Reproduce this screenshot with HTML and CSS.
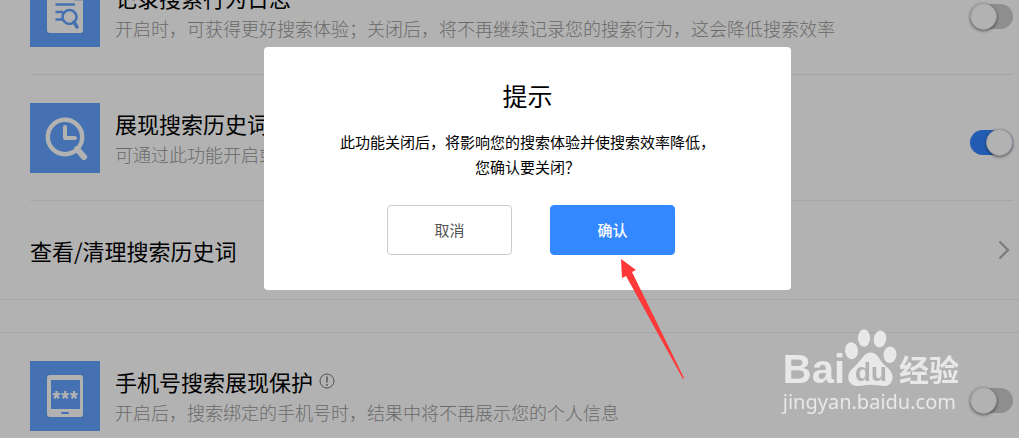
FILE: index.html
```html
<!DOCTYPE html>
<html lang="zh-CN">
<head>
<meta charset="utf-8">
<meta name="viewport" content="width=device-width, initial-scale=1">
<title>搜索设置</title>
<link rel="stylesheet" href="styles.css">
</head>
<body>
<main class="settings">
  <section class="group">
    <div class="row">
      <svg class="row-icon" viewBox="0 0 70 70" aria-hidden="true">
        <rect x="17" y="13" width="36" height="43" rx="3" fill="#fff"/>
        <path d="M43 13 53 24H46q-3 0-3-3z" fill="#c4dcff"/>
        <path d="M25.500 27.500H45M25.500 35H33M25.500 42.500H33" fill="none" stroke="#64a3ff" stroke-width="2.500"/>
        <circle cx="39.500" cy="40" r="7" fill="none" stroke="#64a3ff" stroke-width="2.600"/>
        <path d="M44 45l3 5" stroke="#64a3ff" stroke-width="3.500" stroke-linecap="round"/>
      </svg>
      <div class="row-text">
        <h2 class="row-title"><label for="log">记录搜索行为日志</label></h2>
        <p class="row-desc">开启时，可获得更好搜索体验；关闭后，将不再继续记录您的搜索行为，这会降低搜索效率</p>
      </div>
      <input class="switch" type="checkbox" id="log">
    </div>
    <div class="row">
      <svg class="row-icon" viewBox="0 0 70 70" aria-hidden="true">
        <path d="M47 46l7 8" stroke="#fff" stroke-width="6" stroke-linecap="round"/>
        <circle cx="35" cy="34" r="17.200" fill="none" stroke="#fff" stroke-width="4.400"/>
        <path d="M35 24v11h10" fill="none" stroke="#fff" stroke-width="4" stroke-linecap="round" stroke-linejoin="round"/>
      </svg>
      <div class="row-text">
        <h2 class="row-title"><label for="history">展现搜索历史词</label></h2>
        <p class="row-desc">可通过此功能开启或</p>
      </div>
      <input class="switch" type="checkbox" id="history" checked>
    </div>
    <a class="row-link" href="#">
      <span class="row-title">查看/清理搜索历史词</span>
      <svg class="chevron" viewBox="0 0 12 20" aria-hidden="true"><path d="M1.500 1.500 10 10 1.500 18.500" fill="none" stroke="#b4b4b4" stroke-width="2.400"/></svg>
    </a>
  </section>
  <section class="group">
    <div class="row">
      <svg class="row-icon" viewBox="0 0 70 70" aria-hidden="true">
        <path fill-rule="evenodd" d="M20 14h30q3 0 3 3v36q0 3-3 3H20q-3 0-3-3V17q0-3 3-3zM21 19v29h29V19z" fill="#fff"/>
        <rect x="31" y="51" width="8" height="2" rx="1" fill="#64a3ff"/>
        <path d="M26.500 30v4l-3.700-1.200M26.500 34l3.700-1.200M26.500 34l-2.300 3.300M26.500 34l2.300 3.300M35.200 30v4l-3.700-1.200M35.200 34l3.700-1.200M35.200 34l-2.300 3.300M35.200 34l2.300 3.300M44 30v4l-3.700-1.200M44 34l3.700-1.200M44 34l-2.300 3.300M44 34l2.300 3.300" fill="none" stroke="#fff" stroke-width="2.200"/>
      </svg>
      <div class="row-text">
        <h2 class="row-title"><label for="phone">手机号搜索展现保护</label>
          <svg class="info" viewBox="0 0 16 16" aria-hidden="true"><circle cx="8" cy="8" r="7" fill="none" stroke="#777"/><path d="M8 3.500v6M8 11v1.700" stroke="#777" stroke-width="1.400"/></svg>
        </h2>
        <p class="row-desc">开启后，搜索绑定的手机号时，结果中将不再展示您的个人信息</p>
      </div>
      <input class="switch" type="checkbox" id="phone">
    </div>
  </section>
</main>

<div class="overlay">
  <div class="dialog" role="dialog" aria-modal="true" aria-labelledby="dialog-title">
    <h1 class="dialog-title" id="dialog-title">提示</h1>
    <p class="dialog-text">此功能关闭后，将影响您的搜索体验并使搜索效率降低，<br>您确认要关闭？</p>
    <div class="actions">
      <button class="btn" type="button">取消</button>
      <button class="btn btn-primary" type="button">确认</button>
    </div>
  </div>
</div>

<svg class="arrow" viewBox="0 0 64 121" aria-hidden="true"><path d="M1 0 16 11 12 13 64 119 63 120 6 17 2 19z" fill="#ff3838"/></svg>

<div class="watermark">
  <div class="brand">
    <span class="brand-latin">Bai</span>
    <svg class="paw" viewBox="0 0 56 60" aria-hidden="true">
      <g fill="#e8e8e8">
        <ellipse cx="8.500" cy="22.700" rx="6.500" ry="8.500" transform="rotate(-8 8.500 22.700)"/>
        <ellipse cx="21" cy="10" rx="6" ry="8.700"/>
        <ellipse cx="37" cy="11" rx="6.300" ry="8.500" transform="rotate(10 37 11)"/>
        <ellipse cx="47" cy="26.700" rx="6.500" ry="8.300" transform="rotate(5 47 26.700)"/>
        <path d="M27.500 24.500c4.500 0 7 3 9.500 7s4.500 5.500 9 9.500c6 6 4.500 17-5 17-5 0-8-1.200-13-1.200S20 58 15 58C4.500 58 2.500 47 9 41c4-4 6-5.500 9-9.500s5-7 9.500-7z"/>
      </g>
      <text class="paw-text" x="28" y="53" text-anchor="middle">du</text>
    </svg>
    <span class="brand-cjk">经验</span>
  </div>
  <div class="brand-url">jingyan.baidu.com</div>
</div>
</body>
</html>
```
FILE: styles.css
```css
* { box-sizing: border-box; }

body {
  margin: 0;
  overflow: hidden;
  background: #fff;
  color: #000;
  font-family: "Noto Sans CJK SC", sans-serif;
}

h1, h2, p { margin: 0; font-weight: 300; }

/* The list is scrolled, its first row starts above the window. */
.settings { margin-top: -51px; }

.group {
  padding: 0 6px 0 30px;
  border-bottom: 1px solid #eee;
}

.group + .group {
  margin-top: 32px;
  border-top: 1px solid #eee;
}

.row {
  display: flex;
  align-items: flex-start;
  padding: 28px 0 27px;
  border-bottom: 1px solid #eee;
}

.row-icon {
  flex: none;
  width: 70px;
  height: 70px;
  background: #64a3ff;
}

.row-text {
  flex: 1;
  min-width: 0;
  padding: 3px 0 0 15px;
  white-space: nowrap;
}

.row-title {
  display: flex;
  align-items: center;
  gap: 6px;
  font-size: 22px;
  font-weight: 400;
  line-height: 34px;
}

.row-desc {
  color: #999;
  font-size: 18px;
  line-height: 28px;
}

.info { width: 16px; height: 16px; }

.switch {
  appearance: none;
  flex: none;
  display: flex;
  align-items: center;
  width: 43px;
  height: 25px;
  margin: 27px 0 0;
  border-radius: 13px;
  background: #ccc;
}

.switch::before {
  content: "";
  width: 25px;
  height: 25px;
  border: 1px solid #e0e0e0;
  border-radius: 50%;
  background: #fff;
  box-shadow: 0 1px 3px rgba(0, 0, 0, 0.5);
}

.switch:checked { justify-content: flex-end; background: #3385ff; }

.row-link {
  display: flex;
  align-items: center;
  justify-content: space-between;
  height: 98px;
  padding-right: 3px;
  color: inherit;
  text-decoration: none;
}

.chevron { width: 12px; height: 20px; }

.overlay {
  position: fixed;
  inset: 0 -36px 0 0;
  display: flex;
  align-items: flex-start;
  justify-content: center;
  padding-top: 47px;
  background: rgba(0, 0, 0, 0.3);
}

.dialog {
  width: 527px;
  padding: 29px 20px 35px;
  border-radius: 4px;
  background: #fff;
  text-align: center;
}

.dialog-title { font-size: 25px; font-weight: 400; line-height: 38px; }

.dialog-text {
  padding: 15px 0 26px;
  font-size: 15px;
  font-weight: 400;
  line-height: 25px;
}

.actions {
  display: flex;
  justify-content: center;
  gap: 38px;
  padding-left: 7px;
}

.btn {
  width: 125px;
  height: 50px;
  padding-bottom: 3px;
  border: 1px solid #ccc;
  border-radius: 4px;
  background: #fff;
  color: #555;
  font-family: inherit;
  font-size: 15px;
  font-weight: 400;
}

.btn-primary {
  border-color: #3388ff;
  background: #3388ff;
  color: #fff;
  font-weight: 500;
}

.arrow {
  position: fixed;
  top: 259px;
  left: 620px;
  width: 64px;
  height: 121px;
}

.watermark {
  position: fixed;
  right: 60px;
  bottom: 23px;
  color: #e8e8e8;
}

.brand {
  display: flex;
  align-items: flex-end;
  height: 60px;
}

.brand-latin {
  font: bold 40px/38px "Liberation Sans", sans-serif;
}

.paw { flex: none; width: 56px; height: 60px; margin-left: -2px; }

.paw-text {
  fill: #b2b2b2;
  font: bold 26px "Liberation Sans", sans-serif;
}

.brand-cjk {
  font-size: 30px;
  font-weight: 700;
  line-height: 40px;
}

.brand-url {
  font: 20px/27px "Noto Sans", sans-serif;
}
```
